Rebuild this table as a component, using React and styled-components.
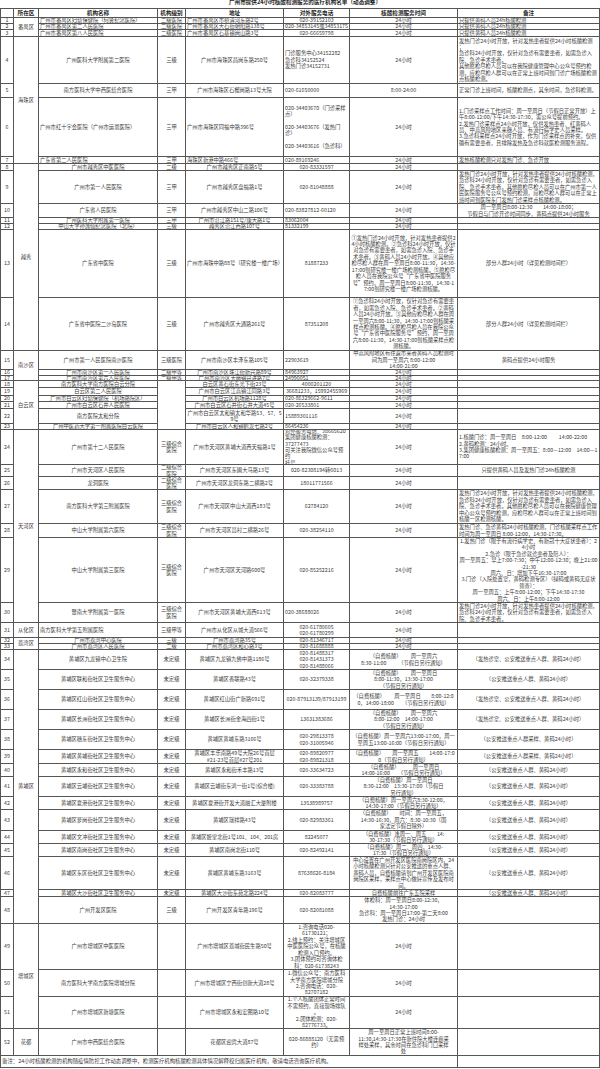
import React from "react";
import styled, { createGlobalStyle } from "styled-components";

const GlobalStyle = createGlobalStyle`
  html, body {
    margin: 0;
    padding: 0;
    background: #fff;
  }
  body {
    font-family: "Noto Sans CJK SC", "Noto Sans", sans-serif;
    color: #333;
  }
`;

// distance between grid lines, px
const COLS = [13, 25, 119, 28, 98, 66, 108, 142];

const H24 = "24小时";
const FEVER = "（发热诊室、公安推送重点人群、黄码24小时）";
const POLICE = "（公安推送重点人群、黄码24小时）";
const POLICE2 = "（公安推送重点人群采样、黄码24小时）";
const YELLOW = "只提供黄码人员24h核酸检测";
const PART = "部分人群24小时（详见检测时间栏）";

// [height, name, level, address, phone, time, note, opts]
// opts.l: left-aligned columns (n name, a address, p phone, o note)
const rows = [
  [6, "广州市番禺区妇幼保健院（何贤纪念医院）", "二级医院", "广州市番禺区市桥清河东路2号", "020-39152103", H24, YELLOW, { l: "nao", d: ["番禺区", 3] }],
  [6, "广州市番禺区第二人民医院", "二级医院", "广州市番禺区大石街朝阳路138号", "020-34853145或34853175", H24, YELLOW, { l: "napo" }],
  [7, "广州市番禺区第八人民医院", "二级医院", "广州市番禺区石基镇岗山路3号", "020-66659798", H24, YELLOW, { l: "nao" }],
  [47, "广州医科大学附属第二医院", "三级", "广州市海珠区昌岗东路250号", "门诊服务中心34152282\n急诊科34152524\n发热门诊34152731", H24,
    "发热门诊24小时开放，针对发热患者提供24小时核酸检测\n；\n急诊科24小时开放，仅针对急诊有需要患者，如需急诊入院、急诊手术患者。\n其他愿检尽检人员可以在我院健康管理中心公众号预约检测，应检尽检人群可以在正常上班时间到门诊广场核酸检测点核酸检测。",
    { l: "po", d: ["海珠区", 4] }],
  [14, "南方医科大学中西医结合医院", "三甲", "广州市海珠区石榴岗路13号大院", "020-61650000", "8:00-24:00", "正常门诊上班时间，核酸检测点，其余时间，急诊科检测。", { l: "po" }],
  [59, "广州市红十字会医院（广州市运恩医院）", "三甲", "广州市海珠区同福中路396号", "020-34403670（门诊采样点）\n\n020-34403676（发热门诊）\n\n020-34403616（急诊科）", H24,
    "1.门诊采样点工作时间：周一至周日（节假日正常开放）上午8:00-12:00/下午14:30-17:30，需公众号提前预约。\n2.发热门诊采样点24小时开放，仅供发热患者、红黄码人员、中高风险地区来穗人员、有流行病学史人员采样。\n3.急诊科采样点24小时开放，作为门诊采样点的补充，仅供确有需要患者，且排除发热及急诊科就医检测服务流程。",
    { l: "napo" }],
  [7, "广东省第二人民医院", "三甲", "海珠区新港中路466号", "020-89169246", H24, "发热核酸检测只对发热门诊、急诊开放", { l: "napo" }],
  [7, "广州市越秀区中医医院", "二级", "广州市越秀区正南路5号", "020-83331597", H24, "", { d: ["越秀", 7] }],
  [33, "广州市第一人民医院", "三甲", "广州市越秀区盘福路1号", "020-81048888", H24,
    "发热门诊24小时开放，针对发热患者提供24小时核酸检测，急诊科24小时开放，仅针对急诊有需要患者，如需急诊入院、急诊手术患者。其他愿检尽检人员可以在广州市第一人民医院服务号公众号预约检测，应检尽检人群可以在正常上班时间到医院东门发热门诊采样点核酸检测。",
    { l: "o" }],
  [14, "广东省人民医院", "三甲", "广州市越秀区中山二路106号", "020-83827812-60120", H24, "周一至周日8:00-12:30　　14:00-18:00；\n节假日与门诊开诊时间同步，黄码点提供24小时服务", { l: "p" }],
  [6, "广州医科大学附属第一医院", "三甲", "广州市沿江路151号/康大路1号", "83062004", H24, "", { l: "p" }],
  [6, "中山大学孙逸仙纪念医院（北院）", "三级", "越秀区沿江西路107号", "81332199", H24, "", { l: "p" }],
  [68, "广东省中医院", "三级", "广州市海珠中路88号（研究楼一楼广场）", "81887233",
    "①发热门诊24小时开放，针对发热患者提供24小时核酸检测。②急诊科24小时开放，仅针对急诊有需要患者，如需急诊入院、急诊手术患者。③黄码人员24小时开放。④其他应检尽检人群在周一至周日8:00-11:30，14:30-17:00到研究楼一楼广场检测核酸。⑤愿检尽检人员在我院公众号“广东省中医院服务号”预约，周一至周日8:00-11:30，14:30-17:00到研究楼一楼广场检测核酸。",
    PART, {}],
  [53, "广东省中医院二沙岛医院", "三级", "广州市越秀区大通路261号", "87351208",
    "①急诊科24小时开放，仅针对急诊有需要患者，如需急诊入院、急诊手术患者。②黄码人员24小时开放。③其他应检尽检人群在周一至周六8:00-11:30，14:30-17:00到核酸采样点检测核酸。④愿检尽检人员在我院公众号“广东省中医院服务号”预约，周一至周六8:00-11:30，14:30-17:00到核酸采样点检测核酸。",
    PART, {}],
  [19, "广州市第一人民医院南沙医院", "三级医院", "广州市南沙区丰泽东路105号", "22903619", "中高风险地区有往返市来者黄码人员检测时间为周一至周六 8:00-12:00\n14:00-21:00", "黄码点提供24小时服务", { l: "p", d: ["南沙区", 3] }],
  [6, "广州市南沙区第一人民医院", "二级甲等", "广州市南沙区珠江街新兴路89号", "84963927", H24, "", { l: "p" }],
  [5, "广州市南沙区第六人民医院", "二级甲等", "广州市南沙区大岗镇兴进路7号", "24990051", H24, "", { l: "p" }],
  [7, "南方医科大学南方医院白云分院", "", "白云区黄石街东光下街23号", "4000201120", H24, "", { d: ["白云区", 6], lv: 6 }],
  [8, "白云区第二人民医院", null, "广州市白云区江高镇江同路3号", "36681233，15992455969", H24, "", {}],
  [6, "广州市白云区妇幼保健院（机场路院区）", null, "广州市白云区机场路1128号", "020-86329662-9611", H24, "", { l: "p" }],
  [7, "广州市白云区石井人民医院", null, "广州市白云区石井街石井大道45号", "020-26533801", H24, "", { l: "p" }],
  [15, "南方医院太和分院", null, "广州市白云区太和镇太和华路53、57、59号", "15889301116", H24, "", { l: "p" }],
  [6, "广州中医药大学第一附属医院白云医院", null, "广州市白云区人和镇鹤龙七路2号", "86454236", H24, "", { l: "p" }],
  [35, "广州市第十二人民医院", "三级综合\n医院", "广州市天河区黄埔大道西天福路1号", "对外服务电话：38665620\n集团健康核酸检测：\n37277473\n可关注我院微信公众号预约\n挂号。", H24,
    "1.核酸门诊：周一至周日　8:00-12:00　　 14:00-22:00\n2.黄码检测：24小时。\n3.集团健康核酸检测：周一至周五：8:00—12:00　14:00—17:00",
    { l: "po", d: ["天河区", 7] }],
  [12, "广州市天河区人民医院", "二级综合\n医院", "广州市天河区东圃大马路13号", "020-82308194转6013", H24, "只提供黄码人员及发热门诊24h核酸检测", {}],
  [13, "龙洞医院", "二级综合\n医院", "广州市天河区龙洞东路二横路2号", "18011771566", H24, "", {}],
  [34, "南方医科大学第三附属医院", "三级综合\n医院", "广州市天河区中山大道西183号", "62784120", H24,
    "发热门诊24小时开放，针对发热患者提供24小时核酸检测，急诊科24小时开放，仅针对急诊有需要患者，如需急诊入院、急诊手术患者。其他愿检尽检人员可以在我院健康管理中心公众号预约检测，应检尽检人群可以在正常上班时间到核酸一区检测核酸。",
    { l: "o" }],
  [14, "中山大学附属第六医院", "三级综合\n医院", "广州市天河区员村二横路26号", "020-38254110", H24, "发热门诊、急诊黄码24小时核酸检测，门诊核酸采样点工作时间为周一至周日 8:00-12:00，14:30-17:30。", { l: "o" }],
  [65, "中山大学附属第三医院", "三级综合\n医院", "广州市天河区天河路600号", "020-85252216", H24,
    "1.发热门诊（限于有流行病学史、有新冠十大症状患者）：24小时\n2.急诊（限于急诊就诊患者及陪人）：\n周一至周五：早上7:00-7:30；中午12:00-12:30；晚上21:00-21:30\n周六、日：增加下午16:30-17:00\n3.门诊（入院处置室，黄码检测专区）（绿码或黄码无症状筛查）：\n周一至周五：上午8:00-12:00；下午14:30-17:30\n周六、日：上午8:00-12:00",
    {}],
  [20, "暨南大学附属第一医院", "三级综合\n医院", "广州市天河区黄埔大道西613号", "020-38688026", H24,
    "发热门诊24小时开放，针对发热患者提供24小时核酸检测，急诊科24小时开放，仅针对急诊有需要患者，如需急诊入院、急诊手术患者。",
    { l: "po" }],
  [15, "南方医科大学第五附属医院", "三级甲等", "广州市从化区从城大道566号", "020-61780605\n020-61780299", H24, "", { l: "n", d: ["从化区", 1] }],
  [6, "广州市荔湾中心医院", "三级", "广州市荔湾路35号", "020-81346717", H24, "", { d: ["荔湾区", 2] }],
  [6, "广州市荔湾区人民医院", "二级", "广州市荔湾区和心路3号", "020-81688888", H24, "", {}],
  [20, "黄埔区九龙镇中心卫生院", "未定级", "黄埔区九龙镇九佛中路1186号", "020-81488317\n020-81431373\n020-81488066", "（自费核酸）　　 周一至周六\n8:30-11:00　　 （节假日另行通知）", FEVER, { d: ["黄埔区", 15] }],
  [20, "黄埔区联和街社区卫生服务中心", "未定级", "黄埔区香联路43号", "020-32379338", "（自费核酸）　　 周一至周日\n8:00-11:30，13:30-17:00\n（节假日另行通知）", POLICE, {}],
  [20, "黄埔区红山街社区卫生服务中心", "未定级", "黄埔区红山街广新路691号", "020-87913139/87913199", "（自费核酸）　　 周一至周日　　8:00-12:00，14:00-18:00　　（节假日另行通知）", FEVER, {}],
  [20, "黄埔区长洲街社区卫生服务中心", "未定级", "黄埔区长洲街金海四街1号", "13631383686", "（自费核酸）　　 周一至周六\n8:00-12:00　14:00-17:00\n（节假日另行通知）", FEVER, {}],
  [20, "黄埔区穗东街社区卫生服务中心", "未定级", "黄埔区黄埔东路3166号", "020-29813378\n020-31005946", "（自费核酸）周一至周六13:00-17:00，周一至周五13:00-16:00（节假日另行通知）", POLICE2, {}],
  [14, "黄埔区黄埔街社区卫生服务中心", "未定级", "黄埔区丰乐南路49号大院26号首层\n#21-23号首层#27号201", "020-89820977\n020-89821318", "（自费核酸）　　周一至周五　　14:00-17:00（节假日另行通知）", POLICE2, {}],
  [13, "黄埔区永和街社区卫生服务中心", "未定级", "黄埔区永和街禾丰路13号", "020-33634723", "（自费核酸）　　　周一至周日\n14:00-16:00　　（节假日另行通知）", POLICE, {}],
  [20, "黄埔区云埔街社区卫生服务中心", "未定级", "黄埔区云埔街东鸿一街1号(综合楼)", "020-33383788", "（自费核酸）周一至周日\n8:30-12:00　13:30-17:00（节假日\n另行通知）", POLICE, {}],
  [13, "黄埔区夏港街社区卫生服务中心", "未定级", "黄埔区夏港街开发大道融汇大厦附楼", "13538989757", "（自费核酸）周一至周六8:30-12:00，\n14:30-17:00（节假日另行通知）", POLICE, {}],
  [21, "黄埔区萝岗街社区卫生服务中心", "未定级", "黄埔区瑞祥路43号", "020-82983361", "（自费核酸）　　时间：周一至周五，\n14:30-16:30，周六：8:30-10:30（国\n家法定节假日除外）", POLICE, {}],
  [13, "黄埔区文冲街社区卫生服务中心", "未定级", "黄埔区姬堂北街1号101、104、201房", "82245077", "（自费核酸）逢周一、周五　　14:\n30-17:30（节假日另行通知）", POLICE, {}],
  [13, "黄埔区南岗街社区卫生服务中心", "未定级", "黄埔区南岗北街110号", "020-82492141", "（自费核酸）周二、周四，14:30-\n17:30（节假日另行通知）", POLICE, {}],
  [33, "黄埔区东区街社区卫生服务中心", "未定级", "黄埔区黄埔东路3163号", "87638626-8184", "中心设置在广州开发区医院南岗院区内，24小时核酸检测只针对公安推送的重点人群、黄码人员，自费核酸请到广州开发区医院南岗院区采样，采样点中心做好宣传及发布时间。", POLICE, {}],
  [7, "黄埔区大沙街社区卫生服务中心", "未定级", "黄埔区大沙街东苑北路224号", "020-82083777", "自费核酸前往广东五院采样", POLICE, {}],
  [27, "广州开发区医院", "三级", "广州开发区青年路196号", "020-82081088", "体检科：周一至周日8:00-12:30，\n14:30-17:00\n急诊科：周一至周日17:00-第二天8:00\n发热门诊：24小时", "", {}],
  [46, "广州市增城区中医医院", "", "广州市增城区荔城街民生路50号", "1.咨询电话020-\n61730121；\n2.线上预约：关注增城区\n中医医院公众号，在核酸\n检测入口预约。\n3.团体预约可咨询体检\n科：020-61738243", H24, "", { d: ["增城区", 3] }],
  [27, "南方医科大学南方医院增城分院", "", "广州市增城区宁西街创新大道28号", "1.微信公众号：南方医科\n大学南方医院增城分院\n2.咨询电话：020-\n82707182", H24, "", {}],
  [32, "广州市增城区新塘医院", "", "广州市增城区永和宏图路10号", "1.个人核酸团体正常时间\n不需预约，直接现场排队\n。\n2.团体检测：020-\n82776733。", H24, "", {}],
  [27, "广州市中西医结合医院", "", "花都区迎宾大道87号", "020-86888120（无需预\n约）", "周一至周日正常上班时间8:00-\n11:30,14:30-17:30在新住院大楼连廊采\n样处采样，其余时间在急诊科门口采样\n处", "", { d: ["花都", 1] }],
];

const HEAD = ["", "所在区", "机构名称", "机构级别", "地址", "对外服务电话", "核酸检测服务时间", "备注"];

const HEAD_TRACK = 8;
const FOOT_TRACK = 11;

function App() {
  const tracks = [HEAD_TRACK, ...rows.map((r) => r[0] - 1), FOOT_TRACK]
    .map((t) => `${t}px`)
    .join(" ");

  return (
    <>
      <GlobalStyle />
      <Page>
        <Title>广州市提供24小时核酸检测服务的医疗机构名单（动态调整）</Title>
        <Sheet $rows={tracks}>
          {HEAD.map((h, i) => (
            <HeadCell key={`h${i}`}>{h}</HeadCell>
          ))}
          {rows.map((r, i) => {
            const [h, name, level, addr, phone, time, note, o] = r;
            const l = o.l || "";
            // single-line rows get a line box no taller than the row
            const tight = h <= 8 ? h - 1 : undefined;
            return (
              <React.Fragment key={i}>
                <Cell $lh={tight}>{i + 1}</Cell>
                {o.d && <Cell $span={o.d[1]}>{o.d[0]}</Cell>}
                <Cell $lh={tight} $left={l.includes("n")}>{name}</Cell>
                {level !== null && <Cell $lh={o.lv ? undefined : tight} $span={o.lv}>{level}</Cell>}
                <Cell $lh={tight} $left={l.includes("a")}>{addr}</Cell>
                <Cell $lh={tight} $left={l.includes("p")}>{phone}</Cell>
                <Cell $lh={tight}>{time}</Cell>
                <Cell $lh={tight} $left={l.includes("o")}>{note}</Cell>
              </React.Fragment>
            );
          })}
          <FootNote>
            备注：24小时核酸检测的机构随疫情防控工作动态调整中，检测医疗机构核酸检测具体情况解释权归属医疗机构，敬请电话咨询医疗机构。
          </FootNote>
          <Cell />
        </Sheet>
      </Page>
    </>
  );
}

export default App;

const Page = styled.div`
  width: 600px;
  background: #fff;
`;

const Title = styled.div`
  height: 8px;
  overflow: hidden;
  padding-left: 10px;
  text-align: center;
  font-size: 5.6px;
  font-weight: 700;
  line-height: 5px;
  color: #222;
`;

const Sheet = styled.div`
  display: grid;
  grid-template-columns: ${COLS.map((c) => `${c - 1}px`).join(" ")};
  grid-template-rows: ${(p) => p.$rows};
  gap: 1px;
  padding: 1px;
  width: max-content;
  background: #555;
`;

const Cell = styled.div`
  grid-row: ${(p) => (p.$span ? `span ${p.$span}` : "auto")};
  display: flex;
  align-items: center;
  justify-content: ${(p) => (p.$left ? "flex-start" : "center")};
  padding: 0 1px;
  overflow: hidden;
  background: #fff;
  font-size: 5.3px;
  line-height: ${(p) => (p.$lh ? `${p.$lh}px` : "6.4px")};
  text-align: ${(p) => (p.$left ? "left" : "center")};
  white-space: pre-line;
  word-break: break-all;
  color: #3a3a3a;
`;

const HeadCell = styled(Cell)`
  font-size: 5.6px;
  font-weight: 700;
  color: #222;
`;

const FootNote = styled(Cell)`
  grid-column: span 7;
  justify-content: flex-start;
  text-align: left;
  font-size: 5.4px;
`;
